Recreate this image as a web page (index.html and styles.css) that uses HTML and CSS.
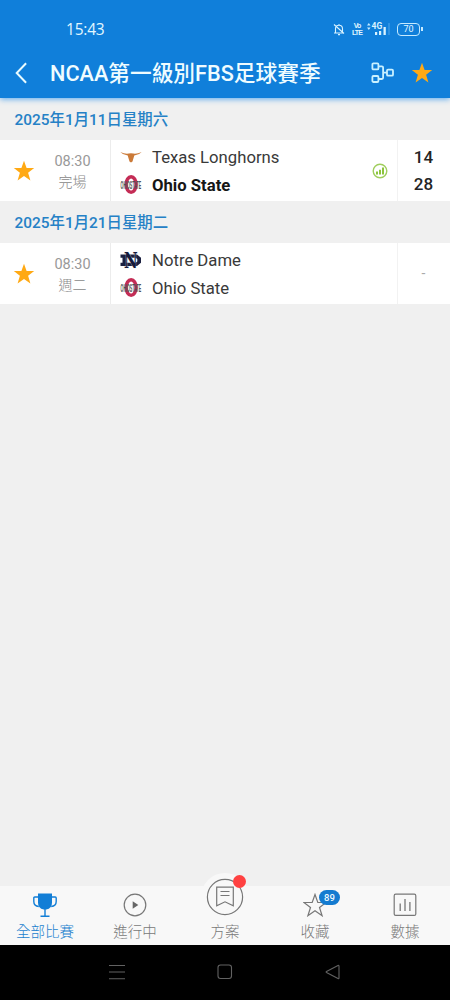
FILE: index.html
```
<!DOCTYPE html>
<html lang="zh-Hant">
<head>
<meta charset="utf-8">
<title>NCAA第一級別FBS足球賽季</title>
<link rel="stylesheet" href="styles.css">
</head>
<body>
<svg class="defs" aria-hidden="true">
  <symbol id="star" viewBox="0 0 22 22"><path d="M11 .8 13.6 8H21.2L15.1 12.7 17.4 20.4 11 15.9 4.6 20.4 6.9 12.7.8 8H8.4Z" fill="#ffa914"/></symbol>
</svg>
<div class="phone">
  <header class="header">
    <div class="status">
      <span class="clock">15:43</span>
      <div class="signals">
        <svg class="bell" viewBox="0 0 12 13"><path d="M2.5 9.5V5.8a3.5 3.5 0 0 1 7 0v3.7M1 10h10M6 1v1.5M5 11.6h2M1 1.5l10 9" fill="none" stroke="#d9f3ff" stroke-width="1.1"/></svg>
        <span class="volte"><span>Vo</span><span>LTE</span></span>
        <svg class="cell" viewBox="0 0 24 14"><path d="M0 3.500 1.800 1l1.800 2.500zM0 5.500h3.600L1.800 8z" fill="#c3eaff"/><text x="4.500" y="7" font-family="Roboto" font-size="8.500" font-weight="700" fill="#d9f3ff">4G</text><path d="M8 10h2.200v3H8zM12 9h2.200v4H12zM16.500 5h2.300v8h-2.300z" fill="#d9f3ff"/><path d="M21.500 1h1v12h-1z" fill="#4fa3e8"/></svg>
        <span class="battery">70</span>
      </div>
    </div>
    <div class="titlebar">
      <svg class="back" viewBox="0 0 12 22"><path d="M10.6 1.2 1.2 11l9.4 9.8" fill="none" stroke="#e8fbff" stroke-width="2"/></svg>
      <h1 class="title">NCAA第一級別FBS足球賽季</h1>
      <svg class="bracket" viewBox="0 0 23 22"><g fill="none" stroke="#c9f1ff" stroke-width="1.8"><rect x="1.4" y="1.4" width="6" height="6" rx="1"/><rect x="1.4" y="14" width="6" height="6" rx="1"/><rect x="16" y="7.7" width="6" height="6" rx="1"/><path d="M7.4 4.4h3.5q1.2 0 1.2 1.2v10.2q0 1.2-1.2 1.2H7.4M12.1 10.7H16"/></g></svg>
      <svg class="star"><use href="#star"/></svg>
    </div>
  </header>
  <main class="list">
    <h2 class="date">2025年1月11日星期六</h2>
    <section class="match">
      <div class="fav"><svg class="star"><use href="#star"/></svg></div>
      <div class="time"><span>08:30</span><span class="state">完場</span></div>
      <div class="teams">
        <div class="team"><svg class="logo" viewBox="0 0 22 20"><path d="M.3 4q4.500 2.200 8.400 1.600 2.300-.8 4.600 0 3.900.6 8.400-1.600-2.600 3-7.400 3.600l-1.800 6q-1.500 1.600-3 0l-1.800-6Q2.900 7 .3 4Z" fill="#cb7a38"/></svg><span>Texas Longhorns</span></div>
        <div class="team winner"><svg class="logo" viewBox="0 0 22 20"><ellipse cx="11.100" cy="9.500" rx="5" ry="7.800" fill="none" stroke="#c42c55" stroke-width="3.400"/><text class="wordmark" transform="translate(.6 14) scale(.33 1)">OHIOSTATE</text></svg><span>Ohio State</span></div>
      </div>
      <div class="stats"><svg class="chart" viewBox="0 0 16 16"><circle cx="8" cy="8" r="6.8" fill="none" stroke="#a0ce5d" stroke-width="1.4"/><path d="M4 8.600h2v3H4zM7 6.700h2v4.900H7zM10 4.400h2v7.200h-2z" fill="#8bc43c"/></svg></div>
      <div class="score"><span>14</span><span>28</span></div>
    </section>
    <h2 class="date">2025年1月21日星期二</h2>
    <section class="match">
      <div class="fav"><svg class="star"><use href="#star"/></svg></div>
      <div class="time"><span>08:30</span><span class="state">週二</span></div>
      <div class="teams">
        <div class="team"><svg class="logo" viewBox="0 0 22 20"><path d="M.5 3.500H17l4 3.200v5l-4 3.300H.5v-3.200h2V6.700h-2zM6 6.700v5.100h9.500l1.800-1.400V8l-1.800-1.300z" fill="#1b2040" fill-rule="evenodd"/><text class="monogram" transform="translate(4 17.200) scale(.68 1)">N</text></svg><span>Notre Dame</span></div>
        <div class="team"><svg class="logo" viewBox="0 0 22 20"><ellipse cx="11.100" cy="9.500" rx="5" ry="7.800" fill="none" stroke="#c42c55" stroke-width="3.400"/><text class="wordmark" transform="translate(.6 14) scale(.33 1)">OHIOSTATE</text></svg><span>Ohio State</span></div>
      </div>
      <div class="stats"></div>
      <div class="score pending">-</div>
    </section>
  </main>
  <nav class="tabs">
    <a class="tab active"><svg class="icon" viewBox="0 0 24 24"><path d="M5 .5h14v9.200q0 5.800-5.700 6.800h-2.600Q5 15.500 5 9.700Z" fill="#127ed6"/><path d="M5 4H1.800q-1 0-1 1v3.500q0 4.500 5 5M19 4h3.200q1 0 1 1v3.500q0 4.500-5 5M12 16v7M7.500 23.200h9" fill="none" stroke="#127ed6" stroke-width="1.400"/></svg><span>全部比賽</span></a>
    <a class="tab"><svg class="icon" viewBox="0 0 24 24"><circle cx="12" cy="12" r="10.800" fill="none" stroke="#777" stroke-width="1.200"/><path d="m9.700 8.200 5.600 3.800-5.600 3.800Z" fill="#666"/></svg><span>進行中</span></a>
    <a class="tab center"><div class="disc"><svg viewBox="0 0 38 38"><g fill="none" stroke="#777" stroke-width="1.200"><circle cx="19" cy="19" r="17.600"/><path d="M10.700 9.200h16.600v18.600L19 23.800l-8.300 4ZM14.500 13.500h9M14.500 17.500h9"/></g></svg><i class="dot"></i></div><span>方案</span></a>
    <a class="tab"><div class="saved"><svg class="icon" viewBox="0 0 24 24"><path d="m12 1.500 2.800 8h8.300l-6.600 5 2.600 8.200-7.100-4.900-7.100 4.900 2.600-8.200-6.600-5h8.300Z" fill="none" stroke="#777" stroke-width="1.200"/></svg><b class="badge">89</b></div><span>收藏</span></a>
    <a class="tab"><svg class="icon" viewBox="0 0 24 24"><rect x="1.200" y="1.200" width="21.600" height="21.200" rx="1.500" fill="none" stroke="#777" stroke-width="1.200"/><path d="M7.200 10.500v7.500M12 6v12M16.900 9v9" stroke="#777" stroke-width="1.300"/></svg><span>數據</span></a>
  </nav>
  <div class="system">
    <svg viewBox="0 0 18 18"><path d="M1 2.500h16M1 9h16M1 15.800h16" stroke="#626262" stroke-width="1.100"/></svg>
    <svg viewBox="0 0 18 18"><rect x="2" y="2" width="13.500" height="13.500" rx="2.500" fill="none" stroke="#626262" stroke-width="1.100"/></svg>
    <svg viewBox="0 0 18 18"><path d="M15 3v12q0 1-1 .5L2.500 9.500q-.8-.5 0-1L14 2.500q1-.5 1 .5Z" fill="none" stroke="#626262" stroke-width="1.100"/></svg>
  </div>
</div>
</body>
</html>
```
FILE: styles.css
```
* { box-sizing: border-box; }
body { margin: 0; font-family: Roboto, "Noto Sans CJK TC", sans-serif; }
svg { display: block; flex: none; }
.defs { position: absolute; width: 0; height: 0; }
.phone { width: 450px; height: 1000px; display: flex; flex-direction: column; background: #f0f0f0; overflow: hidden; }
.header { height: 98px; flex: none; background: #107fda; box-shadow: 0 1px 6px #54a6ed; z-index: 1; }
.status { height: 49px; padding: 9px 28px 0 66px; display: flex; align-items: center; justify-content: space-between; color: #e2f7ff; }
.clock { font-family: "Open Sans", sans-serif; font-size: 15.500px; letter-spacing: -.2px; }
.signals { display: flex; align-items: center; }
.bell { width: 12px; height: 13px; margin-right: 7px; }
.volte { display: flex; flex-direction: column; width: 10px; margin-right: 5px; font: 700 7px/7px "Liberation Sans", sans-serif; letter-spacing: -.9px; align-items: center; }
.cell { width: 24px; height: 14px; margin-right: 6px; }
.battery { position: relative; width: 23px; height: 13px; margin-right: 2px; border: 1.5px solid #c5eaff; border-radius: 4px; font-size: 9px; line-height: 10px; text-align: center; }
.battery::after { content: ""; position: absolute; right: -4px; top: 3px; width: 2px; height: 4px; background: #c5eaff; }
.titlebar { height: 49px; display: flex; align-items: center; padding: 0 17px 2px 15px; }
.back { width: 13px; height: 22px; }
.title { flex: 1; margin: 0 0 0 22px; padding-top: 2px; color: #effcff; font-size: 21.700px; line-height: 30px; font-weight: 500; white-space: nowrap; }
.bracket { width: 23px; height: 22px; margin-right: 17px; }
.star { width: 22px; height: 22px; }
.list { flex: 1; }
.date { height: 42px; margin: 0; padding: 0 14.500px; color: #2581c6; font-size: 15.400px; font-weight: 500; line-height: 44px; }
.match { height: 61px; display: grid; grid-template-columns: 48px 63px 252px 35px 52px; background: #fff; }
.fav { display: flex; align-items: center; justify-content: center; }
.time { display: flex; flex-direction: column; align-items: center; justify-content: center; padding: 2px 13px 0 0; border-right: 1px solid #ececec; color: #999; font-size: 14.5px; line-height: 20px; }
.state { font-size: 14px; font-weight: 300; color: #888; }
.teams { display: flex; flex-direction: column; padding: 4px 0 0 9px; color: #393939; font-size: 16.700px; }
.team { display: flex; align-items: center; gap: 10px; height: 27.500px; }
.logo { width: 22px; height: 20px; overflow: visible; }
.wordmark { font: 700 11px "Liberation Sans", sans-serif; fill: #4d5455; }
.monogram { font: 700 22px "DejaVu Serif", serif; fill: #151a3b; stroke: #e9eaf1; stroke-width: .6px; paint-order: stroke; }
.winner { color: #161616; font-weight: 700; }
.stats { display: flex; align-items: center; justify-content: center; border-right: 1px solid #f2f2f2; }
.chart { width: 16px; height: 16px; }
.score { padding: 4px 1px 0 0; color: #242424; font-size: 17px; font-weight: 500; line-height: 27px; display: flex; flex-direction: column; align-items: center; }
.pending { padding: 0 1px 0 0; justify-content: center; color: #aaa; font-size: 14px; font-weight: 400; }
.tabs { height: 59px; flex: none; display: grid; grid-template-columns: repeat(5, 1fr); background: #f8f8f8; }
.tab { display: flex; flex-direction: column; align-items: center; padding-top: 7px; color: #787878; font-size: 14.500px; line-height: 21px; font-weight: 300; gap: 5px; }
.active { color: #1b7fce; }
.icon { width: 24px; height: 24px; }
.center { margin-top: -13px; padding-top: 0; gap: 1px; }
.disc { position: relative; width: 48px; height: 48px; padding: 5px; border-radius: 50%; background: #f8f8f8; }
.dot { position: absolute; right: 3px; top: 2px; width: 13px; height: 13px; border-radius: 50%; background: #ff4141; }
.saved { position: relative; }
.badge { position: absolute; left: 16px; top: -3px; width: 21px; height: 15px; border-radius: 8px; background: #147bd0; color: #effaff; font-size: 9.500px; line-height: 15px; text-align: center; font-weight: 500; }
.system { height: 55px; flex: none; display: flex; justify-content: center; gap: 90px; padding: 18px 0 0; background: #000; }
.system svg { width: 18px; height: 18px; }
```
